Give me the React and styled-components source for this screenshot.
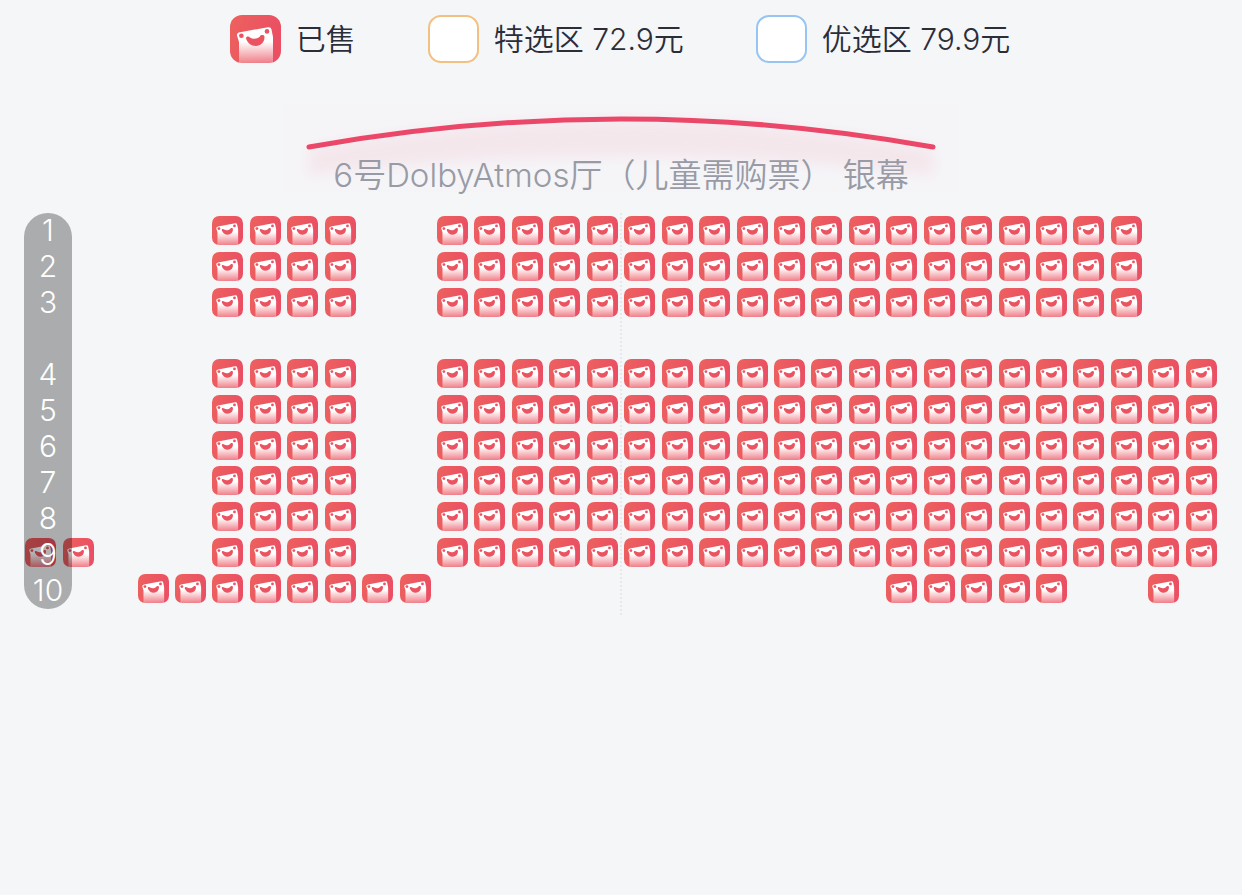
import styled, { createGlobalStyle } from 'styled-components';

const ROW_LABELS = ['1', '2', '3', '', '4', '5', '6', '7', '8', '9', '10'];

// blocks of sold seats, as [row line, first column, last column]
const SOLD_BLOCKS = [
    [1, 6, 9], [1, 12, 30],
    [2, 6, 9], [2, 12, 30],
    [3, 6, 9], [3, 12, 30],
    [5, 6, 9], [5, 12, 32],
    [6, 6, 9], [6, 12, 32],
    [7, 6, 9], [7, 12, 32],
    [8, 6, 9], [8, 12, 32],
    [9, 6, 9], [9, 12, 32],
    [10, 1, 2], [10, 6, 9], [10, 12, 32],
    [11, 4, 11], [11, 24, 28], [11, 31, 31],
];

const seats = SOLD_BLOCKS.flatMap(([row, first, last]) =>
    Array.from({ length: last - first + 1 }, (_, i) => ({ row, column: first + i }))
);

function SoldIcon() {
    return (
        <svg viewBox="0 0 51 48" preserveAspectRatio="none" aria-hidden="true">
            <use href="#sold-seat" />
        </svg>
    );
}

function SoldSymbol() {
    return (
        <Definitions aria-hidden="true">
            <defs>
                <linearGradient id="seat-red" x1="0" y1="0" x2="1" y2="0.3">
                    <stop offset="0" stopColor="#ed625e" />
                    <stop offset="1" stopColor="#ea4f63" />
                </linearGradient>
                <linearGradient id="seat-face" x1="0" y1="0" x2="0" y2="1">
                    <stop offset="0.4" stopColor="#fff" />
                    <stop offset="1" stopColor="#fff" stopOpacity="0.25" />
                </linearGradient>
                <symbol id="sold-seat" viewBox="0 0 51 48" preserveAspectRatio="none">
                    <rect width="51" height="48" rx="12" fill="url(#seat-red)" />
                    <path
                        d="M9 48V27L7 20.500Q6.500 17.800 10 17.200L38 12.200Q41 11.800 41.500 14.500L43 22V48Z"
                        fill="url(#seat-face)"
                    />
                    <circle cx="11.400" cy="20.800" r="2.300" fill="#eb5360" />
                    <circle cx="37" cy="16.400" r="2.300" fill="#eb5360" />
                    <path
                        d="M16 23.500C16 21 19 21 20 22.500C23 24.500 27 24 30 21.500C30.500 19.500 34.500 19.500 34.500 22C34.500 27.500 30.500 31 26 31C21 31 17.500 28 16 23.500Z"
                        fill="#eb5360"
                    />
                </symbol>
            </defs>
        </Definitions>
    );
}

function ScreenCurve() {
    return (
        <Curve viewBox="0 0 676 88" aria-hidden="true">
            <defs>
                <filter id="glow" x="-10%" y="-30%" width="120%" height="160%">
                    <feGaussianBlur stdDeviation="7" />
                </filter>
            </defs>
            <rect width="676" height="88" fill="#f5f5f8" />
            <path
                d="M26 43Q338 -13 650 43L652 72Q338 34 24 72Z"
                fill="#f4e7ec"
                filter="url(#glow)"
            />
            <path
                d="M26 43Q338 -13 650 43"
                fill="none"
                stroke="#eb4769"
                strokeWidth="5"
                strokeLinecap="round"
            />
        </Curve>
    );
}

export default function App() {
    return (
        <Page>
            <GlobalStyle />
            <SoldSymbol />

            <Legend>
                <LegendItem>
                    <Swatch><SoldIcon /></Swatch>
                    已售
                </LegendItem>
                <LegendItem>
                    <Swatch $color="#f2c182" />
                    特选区 72.9元
                </LegendItem>
                <LegendItem>
                    <Swatch $color="#98c4f1" />
                    优选区 79.9元
                </LegendItem>
            </Legend>

            <Screen>
                <ScreenCurve />
                <HallName>6号DolbyAtmos厅（儿童需购票） 银幕</HallName>
            </Screen>

            <SeatMap>
                <CenterLine />
                <SeatGrid>
                    {seats.map(({ row, column }) => (
                        <Seat
                            key={`${row}-${column}`}
                            $row={row}
                            $column={column}
                            disabled
                            aria-label={`${ROW_LABELS[row - 1]}排 已售`}
                        >
                            <SoldIcon />
                        </Seat>
                    ))}
                </SeatGrid>
                <RowBar>
                    {ROW_LABELS.map((label, index) => <RowLabel key={index}>{label}</RowLabel>)}
                </RowBar>
            </SeatMap>
        </Page>
    );
}

const GlobalStyle = createGlobalStyle`
    * {
        box-sizing: border-box;
    }

    body {
        margin: 0;
        background-color: #f4f6f8;
        font-family: Inter, "Noto Sans CJK SC", sans-serif;
    }
`;

const Definitions = styled.svg`
    position: absolute;
    width: 0;
    height: 0;
`;

const Page = styled.main`
    width: 100%;
    min-height: 100vh;
    padding-top: 15px;
`;

const Legend = styled.ul`
    margin: 0;
    padding: 0 2px 0 0;

    display: flex;
    justify-content: center;
    gap: 72px;

    list-style-type: none;
`;

const LegendItem = styled.li`
    height: 48px;

    display: flex;
    align-items: center;
    gap: 15px;

    font-size: 30px;
    font-weight: 350;
    line-height: 48px;
    white-space: nowrap;
    color: #2b2d38;
`;

const Swatch = styled.span`
    width: 51px;
    height: 48px;

    background-color: ${({ $color }) => $color ? '#fff' : 'transparent'};
    border: ${({ $color }) => $color ? `2px solid ${$color}` : 'none'};
    border-radius: 13px;

    svg {
        display: block;
        width: 100%;
        height: 100%;
    }
`;

const Screen = styled.header`
    margin-top: 41px;

    display: grid;
    justify-items: center;
`;

const Curve = styled.svg`
    grid-area: 1 / 1;
    width: 676px;
    height: 88px;
`;

const HallName = styled.h1`
    grid-area: 1 / 1;
    align-self: end;
    margin: 0;

    font-size: 33px;
    font-weight: 350;
    line-height: 34px;
    white-space: pre;
    color: #989ba5;
`;

const SeatMap = styled.section`
    position: relative;
    margin-top: 21px;
    padding: 0 22px;
`;

const CenterLine = styled.div`
    position: absolute;
    top: 0;
    left: calc(50% - 1px);
    height: 402px;
    border-left: 2px dotted #e6e8ea;
`;

const SeatGrid = styled.div`
    position: relative;
    height: 393px;

    display: grid;
    grid-template-columns: repeat(32, 1fr);
    grid-template-rows: repeat(11, 1fr);
    place-items: center;
`;

const Seat = styled.button`
    grid-row: ${({ $row }) => $row};
    grid-column: ${({ $column }) => $column};

    width: 31px;
    height: 29px;
    padding: 0;

    background: none;
    border: none;

    svg {
        display: block;
        width: 100%;
        height: 100%;
    }
`;

const RowBar = styled.ol`
    position: absolute;
    top: 0;
    left: 24px;

    width: 48px;
    margin: 0;
    padding: 0;

    background-color: rgba(0, 0, 0, 0.3);
    border-radius: 24px;

    list-style-type: none;
`;

const RowLabel = styled.li`
    height: 36px;

    font-size: 30px;
    font-weight: 300;
    line-height: 34px;
    text-align: center;
    color: white;
`;
